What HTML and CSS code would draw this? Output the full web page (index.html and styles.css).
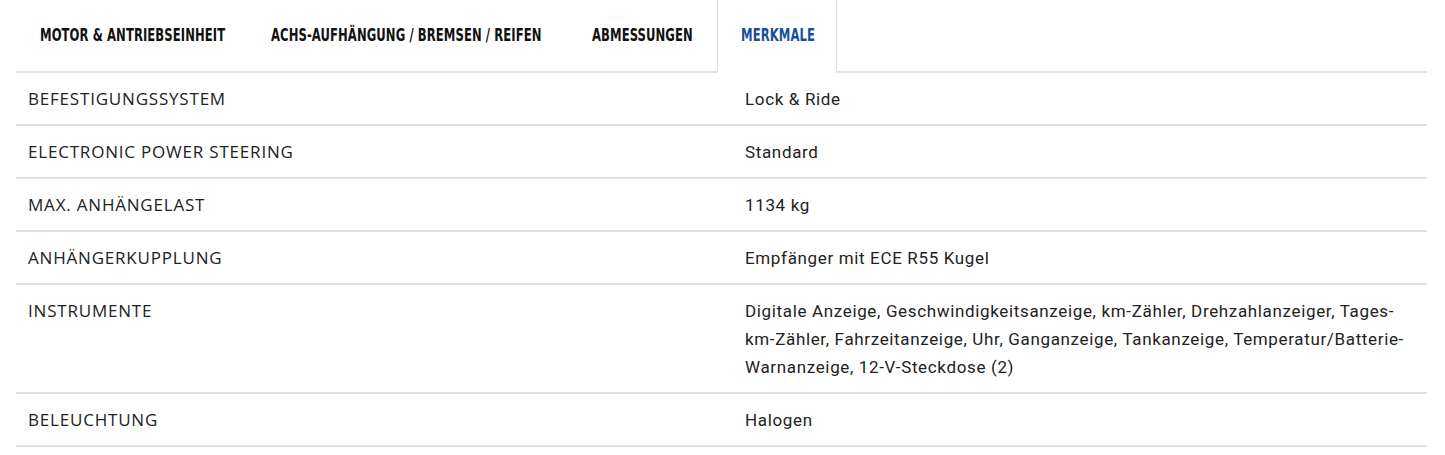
FILE: index.html
```html
<!DOCTYPE html>
<html lang="de">
<head>
<meta charset="utf-8">
<title>Merkmale</title>
<link rel="stylesheet" href="styles.css">
</head>
<body>
<div class="specs">
  <nav class="tabs">
    <div class="tab tab-motor"><span class="tab-text">MOTOR &amp; ANTRIEBSEINHEIT</span></div>
    <div class="tab tab-achs"><span class="tab-text">ACHS-AUFHÄNGUNG / BREMSEN / REIFEN</span></div>
    <div class="tab tab-abm"><span class="tab-text">ABMESSUNGEN</span></div>
    <div class="tab tab-merk active"><span class="tab-text">MERKMALE</span></div>
    <div class="tab-fill"></div>
  </nav>
  <div class="table">
    <div class="row"><div class="label">BEFESTIGUNGSSYSTEM</div><div class="value">Lock &amp; Ride</div></div>
    <div class="row"><div class="label">ELECTRONIC POWER STEERING</div><div class="value">Standard</div></div>
    <div class="row"><div class="label">MAX. ANHÄNGELAST</div><div class="value">1134 kg</div></div>
    <div class="row"><div class="label">ANHÄNGERKUPPLUNG</div><div class="value">Empfänger mit ECE R55 Kugel</div></div>
    <div class="row"><div class="label">INSTRUMENTE</div><div class="value">Digitale Anzeige, Geschwindigkeitsanzeige, km-Zähler, Drehzahlanzeiger, Tages-km-Zähler, Fahrzeitanzeige, Uhr, Ganganzeige, Tankanzeige, Temperatur/Batterie-Warnanzeige, 12-V-Steckdose (2)</div></div>
    <div class="row"><div class="label">BELEUCHTUNG</div><div class="value">Halogen</div></div>
  </div>
</div>
</body>
</html>
```
FILE: styles.css
```css
* { box-sizing: border-box; }
html, body { margin: 0; padding: 0; background: #fff; }
body { font-family: Roboto, "Liberation Sans", sans-serif; color: #222; }
.specs { padding: 0 18px 0 16px; }
.tabs {
  display: flex;
  height: 73px;
  align-items: stretch;
}
.tab {
  flex: none;
  display: flex;
  align-items: center;
  padding: 0 0 1px 24px;
  font-family: "DejaVu Sans Condensed", "DejaVu Sans", sans-serif;
  font-weight: bold;
  font-size: 17px;
  color: #111;
  border-bottom: 2px solid #e0e0e0;
  white-space: nowrap;
  overflow: hidden;
}
.tab-text {
  display: inline-block;
  transform: scaleX(0.76);
  transform-origin: left center;
  letter-spacing: 0.1px;
}
.tab-motor { width: 231px; }
.tab-achs { width: 321px; }
.tab-abm { width: 149px; }
.tab-merk { width: 120px; }
.tab.active {
  color: #15519a;
  border-left: 1px solid #dcdcdc;
  border-right: 1px solid #dcdcdc;
  border-bottom-color: transparent;
  padding-left: 23px;
}
.tab-fill { flex: 1; border-bottom: 2px solid #e0e0e0; }
.row {
  display: grid;
  grid-template-columns: 717px 1fr;
  border-bottom: 2px solid #e0e0e0;
}
.label, .value {
  padding: 12px 12px 11px;
  font-size: 17px;
  line-height: 28px;
}
.label {
  font-family: "Open Sans", Roboto, sans-serif;
  letter-spacing: 0.8px;
}
.value {
  letter-spacing: 0.65px;
}
```
